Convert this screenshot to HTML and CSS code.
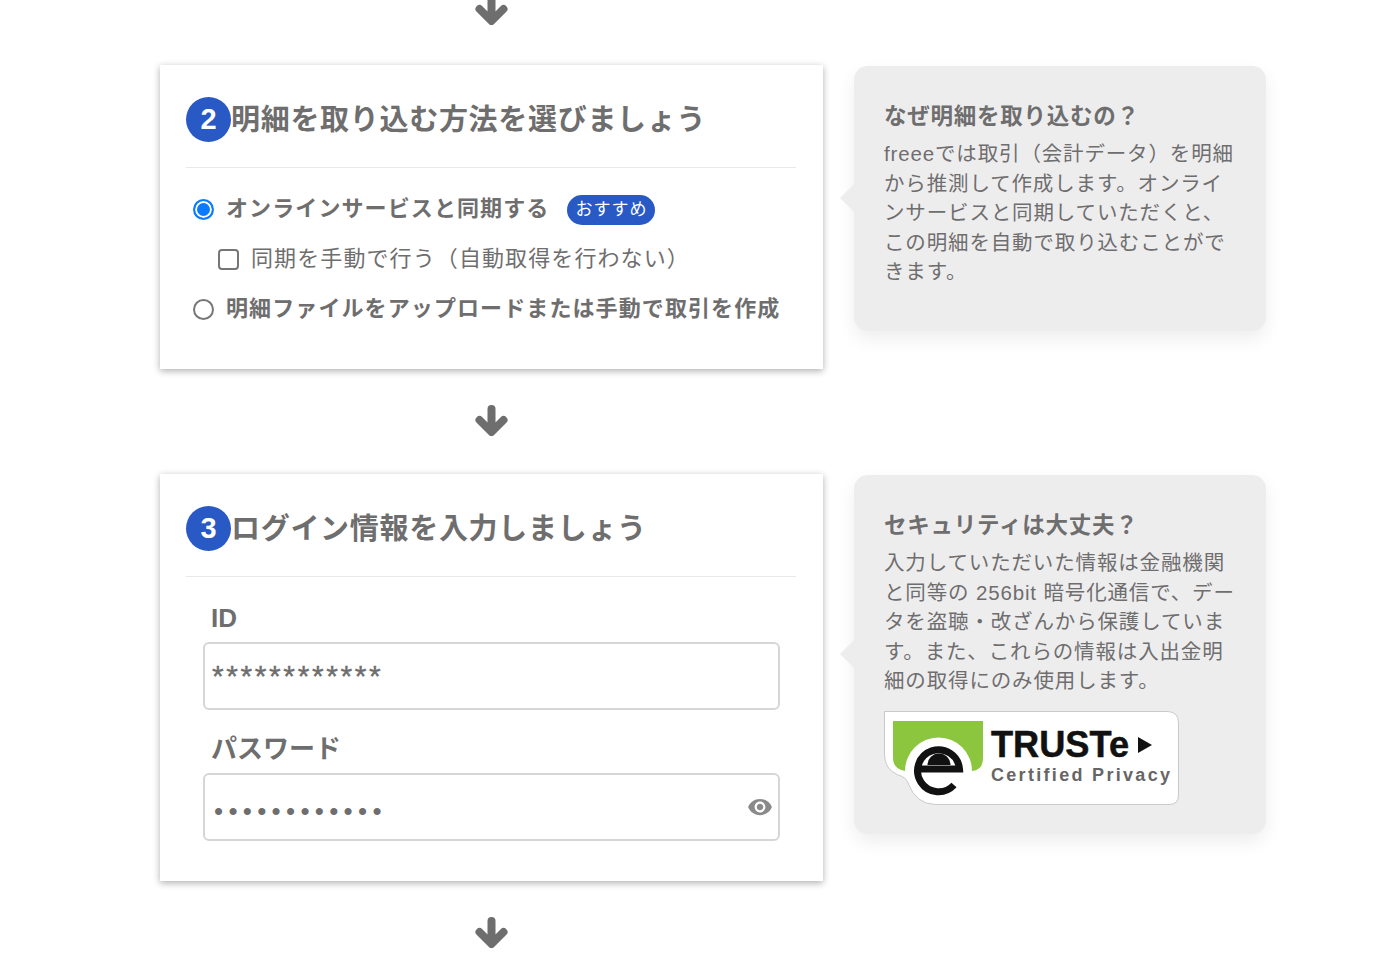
FILE: index.html
```html
<!DOCTYPE html>
<html lang="ja">
  <head>
    <title>明細の取り込み</title>
    <meta charset="UTF-8" />
    <meta name="viewport" content="width=device-width, initial-scale=1" />
    <link rel="stylesheet" href="styles.css">
  </head>
  <body>
    <main class="steps">
      <div class="arrow arrow-top">
        <svg width="33" height="31" viewBox="0 0 33 31"><path d="M16.5 4V25M4.5 15L16.5 27L28.500 15" /></svg>
      </div>

      <section class="step">
        <div class="card card-method">
          <h2 class="card-title"><span class="num">2</span>明細を取り込む方法を選びましょう</h2>
          <div class="options">
            <label class="option strong">
              <input type="radio" name="method" checked />
              <span>オンラインサービスと同期する</span>
              <span class="pill">おすすめ</span>
            </label>
            <label class="option sub">
              <input type="checkbox" />
              <span>同期を手動で行う（自動取得を行わない）</span>
            </label>
            <label class="option strong">
              <input type="radio" name="method" />
              <span>明細ファイルをアップロードまたは手動で取引を作成</span>
            </label>
          </div>
        </div>
        <aside class="note">
          <h3>なぜ明細を取り込むの？</h3>
          <p>freeeでは取引（会計データ）を明細から推測して作成します。オンラインサービスと同期していただくと、この明細を自動で取り込むことができます。</p>
        </aside>
      </section>

      <div class="arrow">
        <svg width="33" height="31" viewBox="0 0 33 31"><path d="M16.5 4V25M4.5 15L16.5 27L28.500 15" /></svg>
      </div>

      <section class="step">
        <div class="card card-login">
          <h2 class="card-title"><span class="num">3</span>ログイン情報を入力しましょう</h2>
          <div class="fields">
            <label class="field-label" for="login-id">ID</label>
            <div class="field">
              <input id="login-id" type="text" value="************" />
            </div>
            <label class="field-label" for="login-pass">パスワード</label>
            <div class="field">
              <div class="dots" id="login-pass">••••••••••••</div>
              <svg class="eye" width="26" height="26" viewBox="0 0 24 24"><path d="M12 4.500C7 4.500 2.730 7.610 1 12c1.730 4.390 6 7.500 11 7.500s9.270-3.110 11-7.500c-1.730-4.390-6-7.500-11-7.500zM12 17c-2.760 0-5-2.240-5-5s2.240-5 5-5 5 2.240 5 5-2.240 5-5 5zm0-8c-1.660 0-3 1.340-3 3s1.340 3 3 3 3-1.340 3-3-1.340-3-3-3z" /></svg>
            </div>
          </div>
        </div>
        <aside class="note">
          <h3>セキュリティは大丈夫？</h3>
          <p>入力していただいた情報は金融機関と同等の 256bit 暗号化通信で、データを盗聴・改ざんから保護しています。また、これらの情報は入出金明細の取得にのみ使用します。</p>
          <svg class="truste" width="295" height="94" viewBox="0 0 295 94">
            <path class="badge" d="M0.500 0.500H283Q294.500 0.500 294.500 12V84Q294.500 93.500 285 93.500H52Q32 93.500 24 72Q22 66 14 64Q0.500 58 0.500 44Z" />
            <path class="green" d="M9 10H99V47Q99 59 88 60A33.500 33.500 0 0 0 21 60Q9 58 9 47Z" />
            <path class="e-ring" d="M70 74A21 21 0 1 1 75.500 58H34" />
            <path class="e-dome" d="M43.500 54A11.500 11.500 0 0 1 66.500 54Z" />
            <text class="truste-name" x="107" y="46" textLength="138" lengthAdjust="spacingAndGlyphs">TRUSTe</text>
            <path class="e-dome" d="M254 26L268 34L254 42Z" />
            <text class="truste-sub" x="107" y="70" textLength="179">Certified Privacy</text>
          </svg>
        </aside>
      </section>

      <div class="arrow">
        <svg width="33" height="31" viewBox="0 0 33 31"><path d="M16.5 4V25M4.5 15L16.5 27L28.500 15" /></svg>
      </div>
    </main>
  </body>
</html>
```

FILE: styles.css
```css
html {
  overflow: hidden;
}
body {
  margin: 0;
  padding: 0;
  background-color: #fff;
  color: #6f6e6e;
  font-family: "Liberation Sans", "Noto Sans CJK JP", sans-serif;
}

.steps {
  width: 1106px;
  margin-left: 160px;
  margin-top: -6px;
}

/* down arrows between the steps */
.arrow {
  width: 663px;
  height: 31px;
  margin: 36px 0 38px;
  display: flex;
  justify-content: center;
}
.arrow-top {
  margin-top: 0;
  margin-bottom: 40px;
}
.arrow svg {
  display: block;
}
.arrow path {
  fill: none;
  stroke: #6f6e6e;
  stroke-width: 8;
  stroke-linecap: round;
  stroke-linejoin: round;
}

.step {
  display: grid;
  grid-template-columns: 663px 412px;
  column-gap: 31px;
  align-items: start;
}

/* left card */
.card {
  background-color: #fff;
  box-shadow: 0 2px 7px rgba(0, 0, 0, 0.32);
  padding: 32px 27px 0 26px;
  box-sizing: border-box;
}
.card-method {
  height: 304px;
}
.card-login {
  height: 407px;
}
.card-title {
  display: flex;
  align-items: flex-start;
  height: 45px;
  margin: 0;
  padding-bottom: 25px;
  border-bottom: 1px solid #e8e8e8;
  font-size: 29px;
  font-weight: bold;
  letter-spacing: 0.7px;
  line-height: 47px;
  box-sizing: content-box;
}
.num {
  width: 45px;
  height: 45px;
  border-radius: 50%;
  background-color: #2859c5;
  color: #fff;
  font-size: 29px;
  letter-spacing: 0;
  line-height: 45px;
  text-align: center;
  flex-shrink: 0;
}

/* step 2 options */
.options {
  padding: 13px 0 0 7px;
}
.option {
  display: flex;
  align-items: center;
  height: 50px;
  font-size: 22px;
  letter-spacing: 1.1px;
}
.option.strong {
  font-weight: bold;
}
.option.sub {
  padding-left: 25px;
  font-size: 22px;
  letter-spacing: 1.1px;
  font-weight: normal;
}
.option input {
  appearance: none;
  width: 21px;
  height: 21px;
  margin: 6px 12px 0 0;
  border: 2px solid #767676;
  background-color: #fff;
  flex-shrink: 0;
}
.option input[type="radio"] {
  border-radius: 50%;
}
.option input[type="radio"]:checked {
  border: 2px solid #0a7aff;
  box-shadow: inset 0 0 0 2px #fff;
  background-color: #0a7aff;
}
.option input[type="checkbox"] {
  border-radius: 4px;
  margin-right: 12px;
}
.pill {
  margin: 8px 0 0 18px;
  padding: 0 8px;
  height: 30px;
  line-height: 29px;
  border-radius: 15px;
  background-color: #2859c5;
  color: #fff;
  font-size: 17px;
  font-weight: normal;
  letter-spacing: 1px;
}

/* step 3 fields */
.fields {
  padding: 0 16px 0 17px;
}
.field-label {
  display: block;
  height: 65px;
  padding-left: 8px;
  box-sizing: border-box;
  font-size: 26px;
  font-weight: bold;
  line-height: 83px;
}
.fields .field + .field-label {
  height: 63px;
  line-height: 79px;
}
.field {
  position: relative;
  height: 68px;
  border: 2px solid #d6d6d6;
  border-radius: 6px;
  box-sizing: border-box;
}
.field input {
  width: 100%;
  height: 64px;
  padding: 0 7px;
  border: 0;
  outline: 0;
  box-sizing: border-box;
  background: transparent;
  color: #6f6e6e;
  font-family: "Liberation Sans", sans-serif;
  font-size: 30px;
  letter-spacing: 2.6px;
  -webkit-text-stroke: 0.4px #6f6e6e;
}
.dots {
  padding: 16px 0 0 9px;
  font-size: 26px;
  letter-spacing: 5.3px;
  line-height: 40px;
  font-family: "Liberation Sans", sans-serif;
}
.eye {
  position: absolute;
  right: 5px;
  top: 19px;
  fill: #8a8a8a;
}

/* right notes */
.note {
  position: relative;
  margin-top: 1px;
  padding: 35px 30px 29px;
  border-radius: 14px;
  background-color: #eeedee;
  box-shadow: 0 8px 18px rgba(0, 0, 0, 0.07);
}
.note::before {
  content: "";
  position: absolute;
  left: -14px;
  top: 50%;
  margin-top: -14px;
  border-top: 14px solid transparent;
  border-bottom: 14px solid transparent;
  border-right: 14px solid #eeedee;
}
.note h3 {
  margin: 0;
  font-size: 22.5px;
  font-weight: bold;
  letter-spacing: 0.75px;
  line-height: 32px;
}
.note p {
  margin: 6px 0 15px;
  font-size: 20.5px;
  letter-spacing: 0.85px;
  line-height: 29.5px;
}

/* TRUSTe seal */
.truste {
  display: block;
}
.badge {
  fill: #fff;
  stroke: #c9c9c9;
}
.green {
  fill: #8cc63f;
}
.e-ring {
  fill: none;
  stroke: #111;
  stroke-width: 7;
}
.e-dome {
  fill: #111;
}
.truste-name {
  fill: #111;
  stroke: #111;
  stroke-width: 0.5;
  font-family: "Liberation Sans", sans-serif;
  font-size: 36px;
  font-weight: bold;
}
.truste-sub {
  fill: #666;
  font-family: "Liberation Sans", sans-serif;
  font-size: 18px;
  font-weight: bold;
}
```
